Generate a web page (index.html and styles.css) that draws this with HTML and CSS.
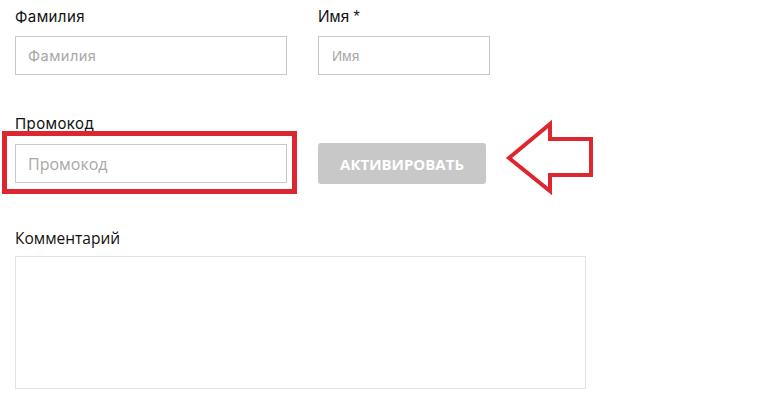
FILE: index.html
```html
<!DOCTYPE html>
<html lang="ru">
<head>
<meta charset="utf-8">
<link rel="stylesheet" href="styles.css">
</head>
<body>
<div class="form">
  <div class="row row-names">
    <div class="field field-last">
      <label class="label label-geo">Фамилия</label>
      <div class="input"><span class="ph ph-geo">Фамилия</span></div>
    </div>
    <div class="field field-first">
      <label class="label label-arial">Имя *</label>
      <div class="input"><span class="ph ph-arial">Имя</span></div>
    </div>
  </div>
  <div class="row row-promo">
    <div class="field field-last">
      <label class="label label-geo">Промокод</label>
      <div class="input"><span class="ph ph-open">Промокод</span></div>
    </div>
    <div class="field field-btn">
      <button class="btn">АКТИВИРОВАТЬ</button>
    </div>
  </div>
  <div class="row row-comment">
    <div class="field field-comment">
      <label class="label label-open">Комментарий</label>
      <div class="textarea"></div>
    </div>
  </div>
  <div class="highlight"></div>
  <svg class="arrow" width="764" height="408" viewBox="0 0 764 408">
    <polygon points="509,158 550,124 550,139 591,139 591,175 550,175 550,191" fill="none" stroke="#dc2630" stroke-width="4" stroke-linejoin="miter"/>
  </svg>
</div>
</body>
</html>
```
FILE: styles.css
```css
html, body {
  margin: 0;
  padding: 0;
  background: #ffffff;
}
.form {
  position: relative;
  width: 764px;
  height: 408px;
  padding: 7px 0 0 15px;
  box-sizing: border-box;
  font-family: "Open Sans", "Liberation Sans", sans-serif;
  color: #1a1a1a;
}
.row {
  display: flex;
  align-items: flex-end;
  gap: 31px;
}
.row-promo {
  margin-top: 39px;
}
.row-comment {
  margin-top: 45px;
}
.field {
  display: flex;
  flex-direction: column;
}
.field-last { width: 272px; }
.field-first { width: 172px; }
.field-comment { width: 571px; }
.label {
  display: block;
  height: 20px;
  line-height: 20px;
  font-size: 15px;
  margin-bottom: 9px;
  white-space: nowrap;
}
.row-promo .label { margin-bottom: 10px; }
.row-comment .label { margin-bottom: 8px; }
.label-geo {
  font-family: "Inter", "Noto Sans", sans-serif;
  font-size: 15px;
  letter-spacing: 0.4px;
  color: #111;
}
.label-arial {
  font-family: "Liberation Sans", Arial, sans-serif;
  font-size: 16px;
  color: #111;
}
.label-open {
  font-family: "Open Sans", sans-serif;
  font-size: 15.5px;
  color: #111;
}
.input {
  height: 39px;
  box-sizing: border-box;
  border: 1px solid #c9c9c9;
  display: flex;
  align-items: center;
  padding-left: 12px;
  background: #fff;
}
.ph {
  color: #a8a8a8;
  white-space: nowrap;
}
.ph-geo {
  font-family: "Inter", "Noto Sans", sans-serif;
  font-size: 14.5px;
  letter-spacing: 0.5px;
}
.ph-arial {
  font-family: "Liberation Sans", Arial, sans-serif;
  font-size: 14px;
  padding-left: 1px;
}
.ph-open {
  font-family: "Open Sans", sans-serif;
  font-size: 16px;
}
.btn {
  width: 168px;
  height: 41px;
  margin-bottom: -1px;
  border: none;
  border-radius: 3px;
  background: #c8c8c8;
  color: #ffffff;
  font-family: "Open Sans", sans-serif;
  font-weight: 700;
  font-size: 15px;
  padding: 0;
  cursor: pointer;
}
.textarea {
  height: 133px;
  box-sizing: border-box;
  border: 1px solid #e2e2e2;
  background: #fff;
}
.highlight {
  position: absolute;
  left: 2px;
  top: 131px;
  width: 295px;
  height: 63px;
  box-sizing: border-box;
  border: 5px solid #dc2630;
  pointer-events: none;
}
.arrow {
  position: absolute;
  left: 0;
  top: 0;
  pointer-events: none;
}
```
